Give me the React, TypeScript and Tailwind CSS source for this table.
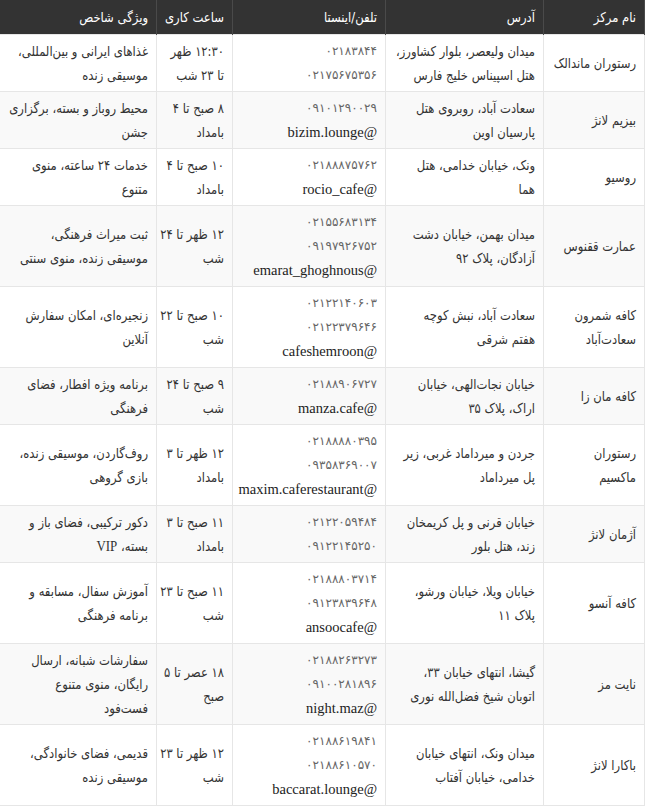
const rows: {
  name: string[];
  address: string[];
  phones: string[];
  insta?: string;
  hours: string[];
  features: string[];
}[] = [
  {
    name: ['رستوران ماندالک'],
    address: ['میدان ولیعصر، بلوار کشاورز،', 'هتل اسپیناس خلیج فارس'],
    phones: ['۰۲۱۸۳۸۴۴', '۰۲۱۷۵۶۷۵۳۵۶'],
    hours: ['۱۲:۳۰ ظهر', 'تا ۲۳ شب'],
    features: ['غذاهای ایرانی و بین‌المللی،', 'موسیقی زنده'],
  },
  {
    name: ['بیزیم لانژ'],
    address: ['سعادت آباد، روبروی هتل', 'پارسیان اوین'],
    phones: ['۰۹۱۰۱۲۹۰۰۲۹'],
    insta: '@bizim.lounge',
    hours: ['۸ صبح تا ۴', 'بامداد'],
    features: ['محیط روباز و بسته، برگزاری', 'جشن'],
  },
  {
    name: ['روسیو'],
    address: ['ونک، خیابان خدامی، هتل', 'هما'],
    phones: ['۰۲۱۸۸۸۷۵۷۶۲'],
    insta: '@rocio_cafe',
    hours: ['۱۰ صبح تا ۴', 'بامداد'],
    features: ['خدمات ۲۴ ساعته، منوی', 'متنوع'],
  },
  {
    name: ['عمارت ققنوس'],
    address: ['میدان بهمن، خیابان دشت', 'آزادگان، پلاک ۹۲'],
    phones: ['۰۲۱۵۵۶۸۳۱۳۴', '۰۹۱۹۷۹۲۶۷۵۲'],
    insta: '@emarat_ghoghnous',
    hours: ['۱۲ ظهر تا ۲۴', 'شب'],
    features: ['ثبت میراث فرهنگی،', 'موسیقی زنده، منوی سنتی'],
  },
  {
    name: ['کافه شمرون', 'سعادت‌آباد'],
    address: ['سعادت آباد، نبش کوچه', 'هفتم شرقی'],
    phones: ['۰۲۱۲۲۱۴۰۶۰۳', '۰۲۱۲۲۳۷۹۶۴۶'],
    insta: '@cafeshemroon',
    hours: ['۱۰ صبح تا ۲۲', 'شب'],
    features: ['زنجیره‌ای، امکان سفارش', 'آنلاین'],
  },
  {
    name: ['کافه مان زا'],
    address: ['خیابان نجات‌الهی، خیابان', 'اراک، پلاک ۳۵'],
    phones: ['۰۲۱۸۸۹۰۶۷۲۷'],
    insta: '@manza.cafe',
    hours: ['۹ صبح تا ۲۴', 'شب'],
    features: ['برنامه ویژه افطار، فضای', 'فرهنگی'],
  },
  {
    name: ['رستوران', 'ماکسیم'],
    address: ['جردن و میرداماد غربی، زیر', 'پل میرداماد'],
    phones: ['۰۲۱۸۸۸۸۰۳۹۵', '۰۹۳۵۸۳۶۹۰۰۷'],
    insta: '@maxim.caferestaurant',
    hours: ['۱۲ ظهر تا ۳', 'بامداد'],
    features: ['روف‌گاردن، موسیقی زنده،', 'بازی گروهی'],
  },
  {
    name: ['آژمان لانژ'],
    address: ['خیابان قرنی و پل کریمخان', 'زند، هتل بلور'],
    phones: ['۰۲۱۲۲۰۵۹۴۸۴', '۰۹۱۲۲۱۴۵۲۵۰'],
    hours: ['۱۱ صبح تا ۳', 'بامداد'],
    features: ['دکور ترکیبی، فضای باز و', 'بسته، VIP'],
  },
  {
    name: ['کافه آنسو'],
    address: ['خیابان ویلا، خیابان ورشو،', 'پلاک ۱۱'],
    phones: ['۰۲۱۸۸۸۰۳۷۱۴', '۰۹۱۲۳۸۳۹۶۴۸'],
    insta: '@ansoocafe',
    hours: ['۱۱ صبح تا ۲۳', 'شب'],
    features: ['آموزش سفال، مسابقه و', 'برنامه فرهنگی'],
  },
  {
    name: ['نایت مز'],
    address: ['گیشا، انتهای خیابان ۳۳،', 'اتوبان شیخ فضل‌الله نوری'],
    phones: ['۰۲۱۸۸۲۶۳۲۷۳', '۰۹۱۰۰۲۸۱۸۹۶'],
    insta: '@night.maz',
    hours: ['۱۸ عصر تا ۵', 'صبح'],
    features: ['سفارشات شبانه، ارسال', 'رایگان، منوی متنوع', 'فست‌فود'],
  },
  {
    name: ['باکارا لانژ'],
    address: ['میدان ونک، انتهای خیابان', 'خدامی، خیابان آفتاب'],
    phones: ['۰۲۱۸۸۶۱۹۸۴۱', '۰۲۱۸۸۶۱۰۵۷۰'],
    insta: '@baccarat.lounge',
    hours: ['۱۲ ظهر تا ۲۳', 'شب'],
    features: ['قدیمی، فضای خانوادگی،', 'موسیقی زنده'],
  },
];

// the reference font is narrower than DejaVu's Arabic, so each line is squeezed a little
function Lines({ lines }: { lines: string[] }) {
  return (
    <>
      {lines.map((l, i) => (
        <div key={i} className="whitespace-nowrap origin-right scale-x-[0.86]">
          {l.includes('VIP') ? (
            <>
              {l.replace('VIP', '')}
              <span className="font-['Liberation_Serif',serif] text-[15px]">VIP</span>
            </>
          ) : (
            l
          )}
        </div>
      ))}
    </>
  );
}

const cell = 'border border-[#e6e6e6] pr-2 pl-1 py-1 align-middle text-right';
const head = 'border-x border-[#4a4a4a] pr-2 pl-1 py-[5px] text-right font-normal text-white';

export default function App() {
  return (
    <div dir="rtl" className="bg-white text-[#333] font-['DejaVu_Sans',sans-serif] text-[13.5px] leading-6">
      <table className="w-[645px] table-fixed border-collapse">
        <colgroup>
          <col className="w-[101px]" />
          <col className="w-[158px]" />
          <col className="w-[153px]" />
          <col className="w-[76px]" />
          <col className="w-[157px]" />
        </colgroup>
        <thead>
          <tr className="bg-[#333333]">
            <th className={head}><Lines lines={['نام مرکز']} /></th>
            <th className={head}><Lines lines={['آدرس']} /></th>
            <th className={head}><Lines lines={['تلفن/اینستا']} /></th>
            <th className={head}><Lines lines={['ساعت کاری']} /></th>
            <th className={head}><Lines lines={['ویژگی شاخص']} /></th>
          </tr>
        </thead>
        <tbody>
          {rows.map((r, i) => (
            <tr key={i} className={i % 2 === 1 ? 'bg-[#f9f9f9]' : 'bg-white'}>
              <td className={cell}>
                <Lines lines={r.name} />
              </td>
              <td className={cell}>
                <Lines lines={r.address} />
              </td>
              <td className={cell}>
                {r.phones.map((p) => (
                  <div key={p} className="whitespace-nowrap text-[12px] text-[#666]">
                    {p}
                  </div>
                ))}
                {r.insta && (
                  <div className="whitespace-nowrap font-['Liberation_Serif',serif] text-[14.5px] text-[#222]">
                    {r.insta}
                  </div>
                )}
              </td>
              <td className={cell}>
                <Lines lines={r.hours} />
              </td>
              <td className={cell}>
                <Lines lines={r.features} />
              </td>
            </tr>
          ))}
        </tbody>
      </table>
    </div>
  );
}
